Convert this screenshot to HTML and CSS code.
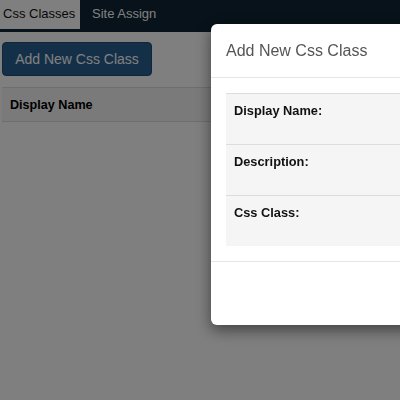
FILE: index.html
```html
<!DOCTYPE html>
<html>
<head>
<meta charset="utf-8">
<link rel="stylesheet" href="styles.css">
</head>
<body>
<nav class="topnav">
  <a class="tab active">Css Classes</a>
  <a class="tab">Site Assign</a>
</nav>
<main class="page">
  <button class="btn-primary">Add New Css Class</button>
  <table class="grid">
    <thead>
      <tr><th>Display Name</th><th></th></tr>
    </thead>
  </table>
</main>
<div class="backdrop"></div>
<div class="modal">
  <div class="modal-header">Add New Css Class</div>
  <div class="modal-body">
    <table class="form-table">
      <tr><td class="lbl">Display Name:</td><td class="field"></td></tr>
      <tr><td class="lbl">Description:</td><td class="field"></td></tr>
      <tr><td class="lbl">Css Class:</td><td class="field"></td></tr>
    </table>
  </div>
  <div class="modal-footer"><div class="footer-space"></div></div>
</div>
</body>
</html>
```
FILE: styles.css
```css
html, body {
  margin: 0;
  padding: 0;
  width: 400px;
  height: 400px;
  overflow: hidden;
  background: #fff;
  font-family: "Liberation Sans", Arial, sans-serif;
  color: #000;
}
.topnav {
  display: flex;
  height: 32px;
  background: #0e2434;
}
.tab {
  display: block;
  height: 29px;
  box-sizing: border-box;
  padding: 5px 11px 0 12px;
  font-size: 13px;
  line-height: 17px;
  color: #fff;
  white-space: nowrap;
}
.tab.active {
  background: #fff;
  color: #111;
  padding: 5px 0 0 3px;
  width: 80px;
}
.page {
  padding: 10px 2px 0 2px;
}
.btn-primary {
  display: block;
  height: 34px;
  width: 150px;
  box-sizing: border-box;
  padding: 0;
  background: #286090;
  border: 1px solid #204d74;
  border-radius: 4px;
  color: #fff;
  font-family: "Liberation Sans", Arial, sans-serif;
  font-size: 14px;
  text-align: center;
}
.grid {
  margin-top: 11px;
  width: 400px;
  border-collapse: collapse;
}
.grid th {
  background: #f5f5f5;
  border-top: 1px solid #ddd;
  border-bottom: 1px solid #ddd;
  height: 33px;
  padding: 0 8px;
  text-align: left;
  font-size: 12.6px;
  font-weight: bold;
}
.backdrop {
  position: fixed;
  left: 0;
  top: 0;
  width: 400px;
  height: 400px;
  background: rgba(0, 0, 0, 0.5);
}
.modal {
  position: fixed;
  left: 211px;
  top: 24px;
  width: 600px;
  background: #fff;
  border-radius: 6px;
  box-shadow: 0 5px 15px rgba(0, 0, 0, 0.5);
}
.modal-header {
  padding: 15px;
  height: 23px;
  line-height: 23px;
  font-size: 16px;
  color: #555;
  border-bottom: 1px solid #e5e5e5;
}
.modal-body {
  padding: 15px;
}
.form-table {
  width: 100%;
  border-collapse: collapse;
  background: #f5f5f5;
}
.form-table td {
  border-top: 1px solid #ddd;
  padding: 8px;
  height: 34px;
  vertical-align: top;
}
.lbl {
  width: 160px;
  font-size: 12.8px;
  font-weight: bold;
  line-height: 18px;
  color: #111;
}
.modal-footer {
  padding: 15px;
  border-top: 1px solid #e5e5e5;
}
.footer-space {
  height: 33px;
}
```
